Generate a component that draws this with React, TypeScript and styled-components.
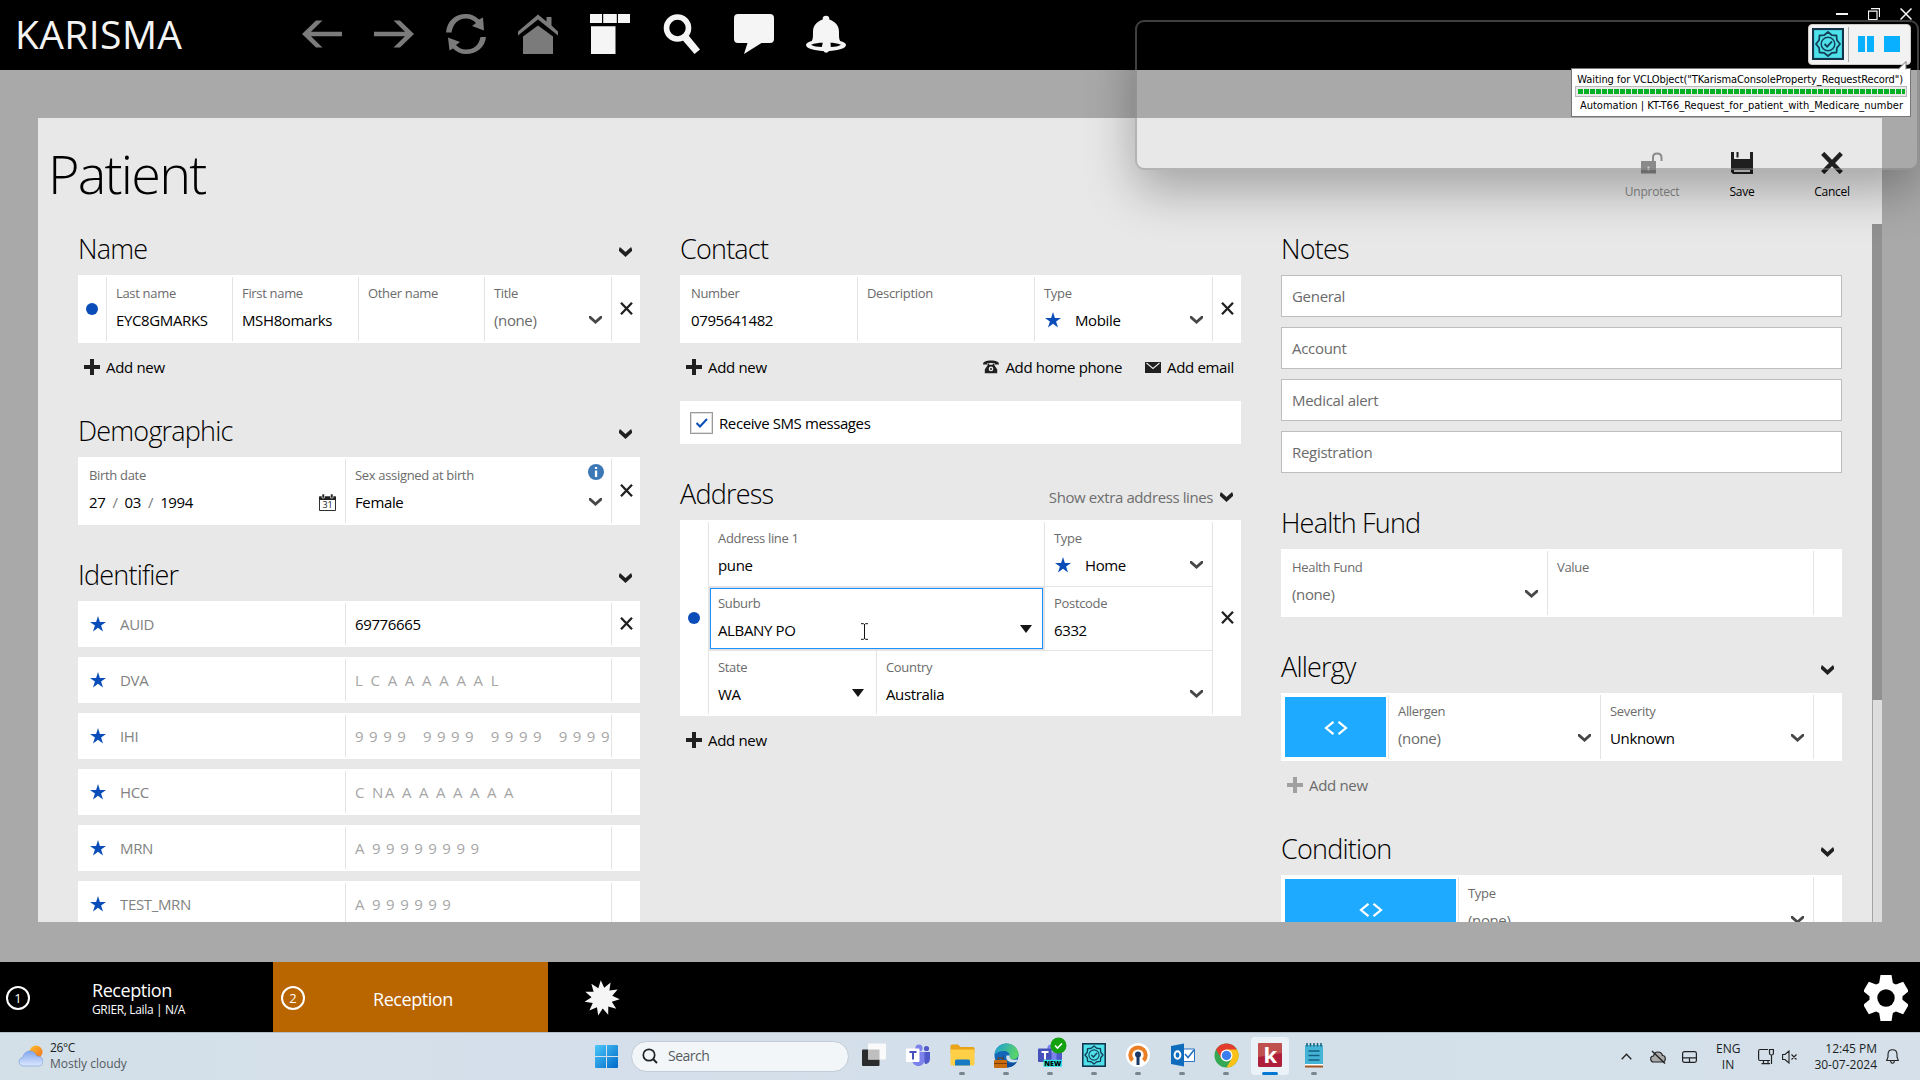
import React from 'react';
import styled, { createGlobalStyle } from 'styled-components';

const Global = createGlobalStyle`
  *, *::before, *::after { box-sizing: border-box; }
  html, body { margin: 0; padding: 0; overflow: hidden; background: #a9a9a9; }
  body { font-family: "Open Sans", "Noto Sans", sans-serif; color: #000; }
  svg { display: block; flex: none; }
`;

/* ---------- shell ---------- */

const Screen = styled.div`
  position: relative;
  width: 1920px;
  height: 1080px;
  overflow: hidden;
  display: flex;
  flex-direction: column;
  background: #a9a9a9;
`;

const TopBar = styled.header`
  height: 70px;
  flex: none;
  display: flex;
  align-items: flex-start;
  background: #000;
  color: #f4f4f4;
`;

const Brand = styled.div`
  width: 302px;
  padding-left: 15px;
  line-height: 67px;
  font-size: 39px;
  font-weight: 400;
  letter-spacing: 0.4px;
`;

const TopIcons = styled.nav`
  display: flex;
  gap: 32px;
  padding-top: 14px;
`;

const WindowControls = styled.div`
  margin-left: auto;
  padding: 8px 8px 0 0;
  display: flex;
  gap: 20px;
`;

const Workspace = styled.main`
  flex: 1;
  min-height: 0;
  padding: 48px 38px 40px;
  display: flex;
`;

const Panel = styled.section`
  flex: 1;
  display: flex;
  flex-direction: column;
  background: #e8e8e8;
  overflow: hidden;
`;

const PanelHeader = styled.div`
  height: 106px;
  flex: none;
  display: flex;
  justify-content: space-between;
`;

const PageTitle = styled.h1`
  margin: 0;
  padding: 20px 0 0 10px;
  font-size: 54px;
  line-height: 70px;
  font-weight: 300;
  letter-spacing: -1.8px;
`;

const PanelActions = styled.div`
  display: flex;
  padding: 34px 5px 0 0;
`;

const ActionButton = styled.div<{ $disabled?: boolean }>`
  width: 90px;
  display: flex;
  flex-direction: column;
  align-items: center;
  gap: 10px;
  font-size: 12px;
  line-height: 16px;
  letter-spacing: -0.25px;
  color: ${p => (p.$disabled ? '#868686' : '#000')};
`;

const ScrollArea = styled.div`
  flex: 1;
  min-height: 0;
  display: flex;
  justify-content: space-between;
`;

const Columns = styled.div`
  display: grid;
  grid-template-columns: 562px 561px 561px;
  column-gap: 40px;
  padding-left: 40px;
  align-items: start;
`;

const ScrollTrack = styled.div`
  width: 10px;
  background: #dddddd;
  border-left: 1px solid #a4a4a4;
`;

const ScrollThumb = styled.div`
  height: 476px;
  margin-left: -1px;
  background: #919191;
`;

/* ---------- form parts ---------- */

const Column = styled.div`
  display: flex;
  flex-direction: column;
  gap: 25px;
`;

const Section = styled.section`
  display: flex;
  flex-direction: column;
`;

const SectionHead = styled.div`
  height: 51px;
  display: flex;
  align-items: flex-end;
  justify-content: space-between;
  padding: 0 8px 8px 0;
`;

const Heading = styled.h2`
  margin: 0;
  font-size: 27px;
  line-height: 36px;
  font-weight: 300;
  letter-spacing: -0.8px;
`;

const HeadSide = styled.div`
  display: flex;
  align-items: center;
  gap: 7px;
  height: 20px;
  margin-bottom: 5px;
  font-size: 15px;
  letter-spacing: -0.4px;
  color: #6e6e6e;
`;

const Card = styled.div<{ $cols: string }>`
  display: grid;
  grid-template-columns: ${p => p.$cols};
  padding: 2px 0;
  background: #fff;
`;

const RowStack = styled.div`
  display: flex;
  flex-direction: column;
  gap: 10px;
`;

const Cell = styled.div<{ $first?: boolean; $focus?: boolean }>`
  height: 64px;
  min-width: 0;
  padding: 7px 9px 0 ${p => (p.$first ? '11px' : '9px')};
  border-left: ${p => (p.$first ? '0' : '1px solid #e4e4e4')};
  ${p => p.$focus && 'box-shadow: inset 0 0 0 1px #dde1e6, inset 0 0 0 2px #1e8fff;'}
`;

const AddressBody = styled.div`
  border-left: 1px solid #e4e4e4;
  display: flex;
  flex-direction: column;
`;

const AddressRow = styled.div<{ $cols: string }>`
  display: grid;
  grid-template-columns: ${p => p.$cols};
  height: 64px;
  & + & { border-top: 1px solid #e4e4e4; }
  & > div:first-child { padding-left: 9px; }
  & > div { height: auto; }
`;

const LabelRow = styled.div`
  display: flex;
  justify-content: space-between;
  height: 18px;
`;

const Label = styled.div`
  font-size: 13px;
  line-height: 18px;
  letter-spacing: -0.32px;
  color: #6b6b6b;
  white-space: nowrap;
`;

const ValueRow = styled.div`
  margin-top: 8px;
  height: 20px;
  display: flex;
  align-items: center;
  justify-content: space-between;
`;

const Value = styled.div<{ $muted?: boolean }>`
  display: flex;
  align-items: center;
  gap: 14px;
  font-size: 15px;
  line-height: 20px;
  letter-spacing: -0.37px;
  white-space: pre;
  color: ${p => (p.$muted ? '#6b6b6b' : '#000')};
`;

const StarSlot = styled.span`
  margin-left: 1px;
`;

const TriangleSlot = styled.span`
  margin: 0 3px 2px 0;
`;

const DateValue = styled(Value)`
  gap: 7px;
`;

const Slash = styled.span`
  color: #7d7d7d;
`;

const InfoBadge = styled.div`
  margin: -2px -2px 0 0;
`;

const SideCell = styled.div<{ $line?: boolean }>`
  display: flex;
  align-items: center;
  justify-content: center;
  padding-bottom: 1px;
  border-left: ${p => (p.$line ? '1px solid #e4e4e4' : '0')};
`;

const Dot = styled.span`
  width: 12px;
  height: 12px;
  border-radius: 50%;
  background: #0b4db8;
`;

const IdCell = styled.div<{ $line?: boolean }>`
  height: 42px;
  display: flex;
  align-items: center;
  gap: 14px;
  padding-left: ${p => (p.$line ? '9px' : '12px')};
  border-left: ${p => (p.$line ? '1px solid #e4e4e4' : '0')};
`;

const IdName = styled.span`
  font-size: 15px;
  letter-spacing: -0.35px;
  color: #828282;
`;

const Mask = styled.span<{ $ls: number; $ws: number }>`
  font-size: 15px;
  white-space: pre;
  color: #a6a6a6;
  letter-spacing: ${p => p.$ls}px;
  word-spacing: ${p => p.$ws}px;
`;

const MaskLead = styled.span`
  letter-spacing: 0.7px;
`;

const LinkRow = styled.div`
  height: 38px;
  padding: 14px 7px 0 6px;
  display: flex;
  align-items: flex-start;
  gap: 23px;
`;

const TextLink = styled.div<{ $muted?: boolean; $push?: boolean }>`
  display: flex;
  align-items: center;
  gap: 6px;
  height: 20px;
  margin-left: ${p => (p.$push ? 'auto' : '0')};
  font-size: 15px;
  line-height: 20px;
  letter-spacing: -0.33px;
  white-space: nowrap;
  color: ${p => (p.$muted ? '#6b6b6b' : '#000')};
`;

const CheckCard = styled.div`
  margin-top: 20px;
  height: 43px;
  padding-left: 10px;
  display: flex;
  align-items: center;
  gap: 6px;
  background: #fff;
  font-size: 15px;
  letter-spacing: -0.4px;
`;

const CheckBox = styled.span`
  width: 23px;
  height: 22px;
  display: flex;
  align-items: center;
  justify-content: center;
  border: 1px solid #9a9a9a;
  box-shadow: inset 0 0 0 1px #dedede;
`;

const NoteList = styled.div`
  display: flex;
  flex-direction: column;
  gap: 10px;
`;

const NoteBox = styled.div`
  height: 42px;
  padding-left: 10px;
  display: flex;
  align-items: center;
  border: 1px solid #bdbdbd;
  background: #fff;
  font-size: 15px;
  letter-spacing: -0.3px;
  color: #6b6b6b;
`;

const CodeTile = styled.div`
  margin: 2px 2px 2px 4px;
  display: flex;
  align-items: center;
  justify-content: center;
  padding-top: 2px;
  background: #1eabff;
`;

const TextCursor = styled.div`
  position: absolute;
  left: 860px;
  top: 623px;
`;

/* ---------- workspace tabs ---------- */

const TabBar = styled.footer`
  height: 70px;
  flex: none;
  display: flex;
  background: #000;
  color: #fff;
`;

const Tab = styled.div<{ $active?: boolean }>`
  width: ${p => (p.$active ? '275px' : '273px')};
  display: flex;
  align-items: center;
  padding-left: ${p => (p.$active ? '8px' : '6px')};
  background: ${p => (p.$active ? '#b96500' : '#000')};
`;

const TabNumber = styled.span`
  width: 24px;
  height: 24px;
  display: flex;
  align-items: center;
  justify-content: center;
  border: 2px solid #fff;
  border-radius: 50%;
  font-size: 13px;
  line-height: 20px;
  margin-top: 2px;
`;

const TabText = styled.div<{ $left: number }>`
  margin-left: ${p => p.$left}px;
  padding-top: 3px;
  display: flex;
  flex-direction: column;
`;

const TabTitle = styled.span`
  font-size: 18px;
  line-height: 22px;
  letter-spacing: -0.45px;
`;

const TabSub = styled.span`
  font-size: 12px;
  line-height: 18px;
  letter-spacing: -0.35px;
`;

const TabIcon = styled.div<{ $end?: boolean }>`
  display: flex;
  align-items: center;
  margin-left: ${p => (p.$end ? 'auto' : '36px')};
  padding: 2px ${p => (p.$end ? '12px' : '0')} 0 0;
`;

/* ---------- taskbar ---------- */

const TaskBar = styled.div`
  height: 48px;
  flex: none;
  display: flex;
  border-top: 1px solid #b4bec6;
  background: linear-gradient(90deg, #d3e0e8, #d5dfeb 28%, #d2dfe9 60%, #d5e0ea);
  color: #1b1f23;
  font-size: 12px;
  line-height: 16px;
`;

const Weather = styled.div`
  width: 593px;
  padding: 7px 0 0 18px;
  display: flex;
  gap: 7px;
`;

const WeatherIcon = styled.div`
  padding-top: 5px;
`;

const Muted = styled.div`
  color: #53595e;
`;

const Narrow = styled.div`
  letter-spacing: -0.35px;
`;

const StartButton = styled.div`
  width: 39px;
  padding: 12px 0 0 2px;
`;

const SearchBox = styled.div`
  width: 218px;
  height: 31px;
  margin: 8px 0 0 -1px;
  padding: 0 0 1px 10px;
  display: flex;
  align-items: center;
  gap: 10px;
  border-radius: 16px;
  border: 1px solid #c3ccd4;
  background: #f2f6f9;
  color: #565b60;
  font-size: 14px;
  letter-spacing: -0.5px;
`;

const AppList = styled.div`
  display: flex;
  gap: 6px;
  margin-left: 6px;
`;

const AppSlot = styled.div<{ $active?: boolean }>`
  width: 38px;
  height: 38px;
  margin-top: 4px;
  display: flex;
  flex-direction: column;
  align-items: center;
  justify-content: space-between;
  padding-top: 6px;
  border-radius: 4px;
  background: ${p => (p.$active ? '#ebf2f7' : 'transparent')};
`;

const Marker = styled.span<{ $active?: boolean }>`
  width: ${p => (p.$active ? '16px' : '6px')};
  height: 3px;
  border-radius: 2px;
  background: ${p => (p.$active ? '#0078d4' : '#7b858d')};
`;

const Tray = styled.div`
  margin-left: auto;
  display: grid;
  grid-template-columns: 29px 32px 34px 42px 24px 30px 74px 13px;
  align-items: center;
  padding-right: 21px;
`;

const TrayText = styled.div<{ $right?: boolean }>`
  width: ${p => (p.$right ? '65px' : '24px')};
  text-align: ${p => (p.$right ? 'right' : 'center')};
  white-space: nowrap;
`;

/* ---------- recording overlay ---------- */

const CaptureFrame = styled.div`
  position: absolute;
  left: 1135px;
  top: 20px;
  width: 784px;
  height: 150px;
  border: 2px solid rgba(125, 125, 125, 0.5);
  border-radius: 9px;
  box-shadow: 0 20px 50px rgba(0, 0, 0, 0.3);
`;

const Recorder = styled.div`
  position: absolute;
  left: 1808px;
  top: 24px;
  width: 103px;
  height: 41px;
  display: flex;
  align-items: center;
  padding: 0 0 1px 3px;
  border-radius: 4px;
  border: 1px solid #cfc9c6;
  background: #f2f2f2;
`;

const RecDivider = styled.span`
  width: 1px;
  height: 35px;
  margin: 0 9px 0 4px;
  background: #ababab;
`;

const RecBar = styled.span<{ $w: number; $gap: number }>`
  width: ${p => p.$w}px;
  height: 16px;
  margin-right: ${p => p.$gap}px;
  background: #08b0ff;
`;

const Tooltip = styled.div`
  position: absolute;
  left: 1571px;
  top: 68px;
  width: 340px;
  height: 49px;
  padding: 4px 3px 0;
  display: flex;
  flex-direction: column;
  border: 1px solid #767676;
  background: #fff;
  font-family: "DejaVu Sans Condensed", "DejaVu Sans", sans-serif;
  font-stretch: condensed;
  font-size: 11px;
  line-height: 13px;
  text-align: right;
  white-space: nowrap;
`;

const TooltipLine = styled.div<{ $spacing: number }>`
  padding-right: 4px;
  letter-spacing: ${p => p.$spacing}px;
`;

const TooltipTail = styled.div`
  position: absolute;
  right: 2px;
  top: -8px;
`;

const Progress = styled.div`
  height: 11px;
  margin: 0 0 2px;
  padding: 2px 1px 2px 2px;
  border: 1px solid #b9b9b9;
  background: #e9e9e9;
  flex: none;
`;

const ProgressFill = styled.div`
  height: 5px;
  background: repeating-linear-gradient(90deg, #06b025 0 5px, #e9e9e9 5px 6px);
`;

/* ---------- icons ---------- */

const Chevron = ({ bold }: { bold?: boolean }) => (
  <svg width="13" height="10" viewBox="0 0 13 10">
    <path d={bold ? 'M0.9 0 L6.5 5 L12.1 0 L13 2.2 V4 L6.5 10 L0 4 V2.2 Z' : 'M0 1 H1.8 L6.5 5.2 L11.2 1 H13 V3.2 L6.5 9 L0 3.2 Z'} fill={bold ? '#202020' : '#474747'} />
  </svg>
);

const Triangle = () => (
  <svg width="12" height="8" viewBox="0 0 12 8"><path d="M0 0H12L6 8Z" fill="#151515" /></svg>
);

const Cross = ({ size = 13, stroke = 2.3 }: { size?: number; stroke?: number }) => (
  <svg width={size} height={size} viewBox="0 0 13 13">
    <path d="M1 0.8L12 12.2M12 0.8L1 12.2" stroke="#202020" strokeWidth={stroke} fill="none" />
  </svg>
);

const Plus = ({ muted }: { muted?: boolean }) => (
  <svg width="16" height="16" viewBox="0 0 16 16"><path d="M6 0H10V6H16V10H10V16H6V10H0V6H6Z" fill={muted ? '#a0a0a0' : '#202020'} /></svg>
);

const Star = () => (
  <svg width="16" height="16" viewBox="0 0 16 16">
    <path d="M8 0L9.9 5.9H16L11.1 9.5L13 15.5L8 11.8L3 15.5L4.9 9.5L0 5.9H6.1Z" fill="#0b4db8" />
  </svg>
);

const Angles = () => (
  <svg width="24" height="14" viewBox="0 0 24 14">
    <path d="M9.5 0.8L2 7L9.5 13.2M14.5 0.8L22 7L14.5 13.2" stroke="#fff" strokeWidth="2.2" fill="none" />
  </svg>
);

const CalendarIcon = () => (
  <svg width="17" height="17" viewBox="0 0 17 17">
    <path d="M0.5 3H16.5V16.5H0.5Z" fill="#fff" stroke="#303030" />
    <path d="M0 2.5H17V6H0Z" fill="#202020" />
    <path d="M3 0H5.5V4H3ZM11.5 0H14V4H11.5Z" fill="#202020" stroke="#fff" strokeWidth="0.6" />
    <text x="8.6" y="14.4" fontSize="9" textAnchor="middle" fill="#202020" fontFamily="Open Sans">31</text>
  </svg>
);

const InfoIcon = () => (
  <svg width="16" height="16" viewBox="0 0 16 16">
    <circle cx="8" cy="8" r="8" fill="#3b78b5" />
    <path d="M6.9 3H9.2V5H6.9ZM6.9 6.4H9.2V13H6.9Z" fill="#fff" />
  </svg>
);

const PhoneIcon = () => (
  <svg width="16" height="14" viewBox="0 0 16 14">
    <path d="M0 4.500C0 1.500 3 0.500 8 0.500S16 1.500 16 4.500H11.800V3H4.200V4.500Z" fill="#202020" />
    <path d="M4.600 3.500H6.200V4.800H9.800V3.500H11.400V5.200L14.200 9.500V13.300H1.800V9.500L4.600 5.200Z" fill="#202020" />
    <circle cx="8" cy="8.900" r="2.300" fill="#e8e8e8" /><circle cx="8" cy="8.900" r="1" fill="#202020" />
  </svg>
);

const MailIcon = () => (
  <svg width="16" height="11" viewBox="0 0 16 11">
    <path d="M0 0H16V11H0Z" fill="#202020" /><path d="M1.500 1L8 6.500L14.500 1" fill="none" stroke="#e8e8e8" strokeWidth="1.100" />
  </svg>
);

const UnlockIcon = () => (
  <svg width="22" height="22" viewBox="0 0 22 22">
    <path d="M0 9H15V21.500H0Z" fill="#8b8b8b" />
    <path d="M12 9V5.500C12 2.500 13.500 1.500 16 1.500S20.500 2.500 20.500 5.500V9" fill="none" stroke="#8b8b8b" strokeWidth="2" />
    <path d="M6.500 14.500H8.500V18.500H6.500Z" fill="#cfcfcf" />
  </svg>
);

const SaveIcon = () => (
  <svg width="22" height="22" viewBox="0 0 22 22">
    <path d="M0 0H3V7H19V0H22V22H2L0 20Z" fill="#1f1f1f" /><path d="M5.500 0H7.500V5.500H5.500Z" fill="#1f1f1f" />
    <path d="M3 18H19V20H3Z" fill="#dadada" />
  </svg>
);

const BackIcon = ({ flip }: { flip?: boolean }) => (
  <svg width="40" height="40" viewBox="0 0 40 40">
    <path transform={flip ? 'translate(40 0) scale(-1 1)' : undefined} d="M0 20L14 6.500H20.500L9 17.700H40V22.300H9L20.500 33.500H14Z" fill="#7b7b7b" />
  </svg>
);

const RefreshIcon = () => (
  <svg width="40" height="40" viewBox="0 0 40 40">
    <path d="M0 18.500C1 7 9 0 20 0C25.500 0 29.500 2 33 5.500L37 3.500L38 16.500L26 12L30 9C27 6 24 4.500 20 4.500C12 4.500 7 10 5.500 18.500Z" fill="#7b7b7b" />
    <path d="M40 23C39 33 31 40 20 40C14.500 40 10.500 38 7 34.500L3.500 36.500L2 23.500L14 28L10 31C13 34 16 35.500 20 35.500C28 35.500 33 31 34.500 23Z" fill="#7b7b7b" />
  </svg>
);

const HomeIcon = () => (
  <svg width="40" height="40" viewBox="0 0 40 40">
    <path d="M0 17.500L20 0.500L28.500 7.500V3H33.500V11.500L40 17.500V21.500L20 5.500L0 21.500Z" fill="#7b7b7b" />
    <path d="M5 22.500L20 11.500L35 22.500V40H5Z" fill="#7b7b7b" />
  </svg>
);

const BoardIcon = () => (
  <svg width="40" height="40" viewBox="0 0 40 40">
    <path d="M0 0H12V9H0ZM13.200 0H26.800V9H13.200ZM28 0H40V9H28ZM1 12.300H25.500V40H1Z" fill="#f5f5f5" />
  </svg>
);

const SearchIcon = () => (
  <svg width="40" height="40" viewBox="0 0 40 40">
    <circle cx="15.500" cy="14" r="11" fill="none" stroke="#f5f5f5" strokeWidth="5.600" />
    <path d="M20.500 26L26.500 21.500L38 35.500L32.500 40Z" fill="#f5f5f5" />
  </svg>
);

const ChatIcon = () => (
  <svg width="40" height="40" viewBox="0 0 40 40">
    <path d="M4 0H36Q40 0 40 4V25Q40 29 36 29H27.500L10 40L13.500 29H4Q0 29 0 25V4Q0 0 4 0Z" fill="#f5f5f5" />
  </svg>
);

const BellIcon = () => (
  <svg width="40" height="40" viewBox="0 0 40 40">
    <circle cx="20" cy="5" r="3.300" fill="#f5f5f5" />
    <path d="M16.500 5.500C10 8 7 12 7 18C7 23 7 25 5.500 27.500H34.500C33 25 33 23 33 18C33 12 30 8 23.500 5.500Z" fill="#f5f5f5" />
    <path d="M20 25.500C9 25.500 0 27.500 0 31S9 37 20 37S40 34.500 40 31S31 25.500 20 25.500Z" fill="#f5f5f5" />
    <path d="M5 30.800C9 29 13 28.700 16.800 28.700L15.800 33C11 33 7.500 32.500 5 30.800ZM35 30.800C31 29 27 28.700 24.500 28.700L24.800 33C29 33 32.500 32.500 35 30.800Z" fill="#000" />
    <path d="M17 28H23.500V36.500Q20 41 17 36.500Z" fill="#f5f5f5" />
  </svg>
);

const CaptionIcon = ({ kind }: { kind: 'min' | 'restore' | 'close' }) => (
  <svg width="12" height="12" viewBox="0 0 12 12" stroke="#fff" fill="none">
    {kind === 'min' && <path d="M0 6H12" strokeWidth="2" />}
    {kind === 'restore' && <path d="M0.500 3V11.500H9V3ZM0 3.200H9.500M3 0.700H11.500V9" strokeWidth="1.200" />}
    {kind === 'close' && <path d="M0.500 0.500L11.500 11.500M11.500 0.500L0.500 11.500" strokeWidth="1.500" />}
  </svg>
);

const points = (n: number, cx: number, cy: number, r1: number, r2: number) =>
  Array.from({ length: n * 2 }, (_, i) => {
    const r = i % 2 ? r2 : r1;
    const a = (Math.PI * i) / n - Math.PI / 2;
    return `${(cx + r * Math.cos(a)).toFixed(2)},${(cy + r * Math.sin(a)).toFixed(2)}`;
  }).join(' ');

const BurstIcon = () => (
  <svg width="36" height="36" viewBox="0 0 36 36">
    <polygon points={points(11, 18, 18, 17.8, 10.5)} fill="#f5f5f5" transform="rotate(-4 18 18)" />
  </svg>
);

const GearIcon = () => (
  <svg width="44" height="46" viewBox="0 0 44 46">
    {[0, 60, 120].map(a => (
      <path key={a} d="M16.500 0H27.500L29 9V37L27.500 46H16.500L15 37V9Z" fill="#fff" transform={`rotate(${a} 22 23)`} />
    ))}
    <circle cx="22" cy="23" r="16.500" fill="#fff" /><circle cx="22" cy="23" r="8.700" fill="#000" />
  </svg>
);

const BadgeIcon = ({ w, h }: { w: number; h: number }) => (
  <svg width={w} height={h} viewBox="0 0 32 32">
    <rect x="1" y="1" width="30" height="30" fill="#4fe1ea" stroke="#12344d" strokeWidth="2.200" />
    <path d={`M${points(8, 16, 16, 12, 9.7).split(' ').join('L')}Z`} fill="none" stroke="#15405a" strokeWidth="1.800" strokeLinejoin="round" />
    <circle cx="16" cy="16" r="6.800" fill="none" stroke="#15405a" strokeWidth="1.500" />
    <path d="M12.500 16L15.200 18.700L20 13.300" fill="none" stroke="#15405a" strokeWidth="1.800" />
  </svg>
);

const WeatherGlyph = () => (
  <svg width="25" height="22" viewBox="0 0 25 22">
    <defs>
      <linearGradient id="sun" x1="0" y1="0" x2="1" y2="1"><stop offset="0" stopColor="#fbc02d" /><stop offset="1" stopColor="#f2701d" /></linearGradient>
      <linearGradient id="cloud" x1="0" y1="0" x2="0" y2="1"><stop offset="0" stopColor="#82a6ee" /><stop offset="1" stopColor="#dce8fd" /></linearGradient>
    </defs>
    <circle cx="18" cy="7" r="6.500" fill="url(#sun)" />
    <path d="M6 21C2.500 21 1 19 1 16.500S3 12.500 5 12.500C5.500 8.500 8.500 6 12 6S17.500 8 18.500 11C22 11 25 13 25 16.500S22.500 21 19.500 21Z" fill="url(#cloud)" stroke="#7599dc" strokeWidth="0.600" />
  </svg>
);

const WindowsIcon = () => (
  <svg width="23" height="23" viewBox="0 0 23 23">
    <defs><linearGradient id="win" x1="0" y1="0" x2="1" y2="1"><stop offset="0" stopColor="#4cc8fb" /><stop offset="1" stopColor="#0069c9" /></linearGradient></defs>
    <path d="M0 1Q0 0 1 0H11V11H0ZM12 0H22Q23 0 23 1V11H12ZM0 12H11V23H1Q0 23 0 22ZM12 12H23V22Q23 23 22 23H12Z" fill="url(#win)" />
  </svg>
);

const MagnifierIcon = () => (
  <svg width="16" height="16" viewBox="0 0 16 16"><circle cx="7" cy="7" r="5.700" fill="none" stroke="#222" strokeWidth="1.700" /><path d="M11 11L15 15" stroke="#222" strokeWidth="1.900" /></svg>
);

const TaskViewIcon = () => (
  <svg width="24" height="24" viewBox="0 0 24 24">
    <rect x="0" y="6.500" width="17.500" height="16.500" rx="1" fill="#2c2c2c" /><rect x="6" y="0.500" width="18" height="16" rx="1" fill="#fafafa" /><rect x="6" y="6.500" width="11.500" height="10" fill="#bfbfbf" />
  </svg>
);

const TeamsIcon = ({ fresh }: { fresh?: boolean }) => (
  <svg width="30" height="26" viewBox="0 0 30 26" overflow="visible">
    <circle cx="16" cy="5" r="3.600" fill="#7b83eb" /><circle cx="23.500" cy="5.500" r="2.600" fill="#5059c9" />
    <path d="M18 9H27V15.500C27 19.500 24.500 21 22 21Z" fill="#5059c9" />
    <path d="M9 9H21.500V16.500C21.500 20.500 19 23 15.500 23S9 20.500 9 16.500Z" fill="#7b83eb" />
    <rect x="3" y="5.500" width="13.500" height="13.500" rx="1" fill={fresh ? '#4650bb' : '#fff'} />
    <path d="M6.500 9H13.500M10 9V16.500" stroke={fresh ? '#fff' : '#4650bb'} strokeWidth="2" />
    {fresh && (
      <>
        <rect x="8.500" y="16.800" width="18.500" height="7" fill="#2fe3e3" />
        <text x="17.700" y="22.800" fontSize="7" fontWeight="800" textAnchor="middle" fontFamily="Open Sans">NEW</text>
        <circle cx="23.500" cy="2.500" r="8" fill="#13a10e" /><path d="M20 2.500L22.500 5L27 0.500" stroke="#fff" strokeWidth="1.600" fill="none" />
      </>
    )}
  </svg>
);

const FolderIcon = () => (
  <svg width="25" height="24" viewBox="0 0 25 24">
    <path d="M0.500 3Q0.500 1.500 2 1.500H8L10.500 4H23Q24.500 4 24.500 5.500V10H0.500Z" fill="#e8a317" />
    <path d="M0.500 6.500H24.500V21Q24.500 22.500 23 22.500H2Q0.500 22.500 0.500 21Z" fill="#ffcf48" />
    <path d="M5 22.500V18Q5 16.500 6.500 16.500H18.500Q20 16.500 20 18V22.500Z" fill="#1579c4" />
  </svg>
);

const EdgeIcon = () => (
  <svg width="26" height="26" viewBox="0 0 26 26">
    <defs><linearGradient id="edge" x1="0" y1="0" x2="1" y2="0.300"><stop offset="0" stopColor="#1c9cde" /><stop offset="1" stopColor="#56d368" /></linearGradient></defs>
    <circle cx="13.500" cy="12.500" r="12" fill="#1467b8" />
    <path d="M1.500 12C2 5 7 0.500 13.500 0.500S25.500 5.500 25.500 11C25.500 14.500 23 16.500 20 16.500S15.500 15 16.500 13C17 10 14.500 8 11 8C6 8 3 10 1.500 12Z" fill="url(#edge)" />
    <path d="M12 11C9.500 14 11 20 18 20.500L24 18.500C22 22 19 24.300 14 24.500C10 22 8 14 12 11Z" fill="#0d4c9a" />
    <path d="M17 12.500C15.500 15.500 18.500 17.500 24.500 16.500L23.500 19C17 20.500 12 17.500 13.500 12.500Z" fill="#d4e0ea" />
    <rect x="1" y="17" width="13" height="8" rx="1" fill="#c76c0c" /><path d="M5 17V15H10V17M1 20.500H14" stroke="#7d3d04" fill="none" />
  </svg>
);

const VpnIcon = () => (
  <svg width="24" height="24" viewBox="0 0 24 24">
    <circle cx="12" cy="12" r="12" fill="#fff" />
    <path d="M6.500 17.500A7.700 7.700 0 1 1 17.500 17.500" fill="none" stroke="#ea7e24" strokeWidth="4" />
    <circle cx="12" cy="11.500" r="3" fill="#1a3967" /><path d="M10.500 13H13.500V22H10.500Z" fill="#1a3967" />
  </svg>
);

const OutlookIcon = () => (
  <svg width="25" height="24" viewBox="0 0 25 24">
    <path d="M12 6H24.500V18.500H12Z" fill="#fff" stroke="#2a72c4" /><path d="M15 11L18 14.500L24 7" stroke="#1c6dc1" strokeWidth="1.500" fill="none" />
    <path d="M1 3L14 0.500V23.500L1 21Z" fill="#0f6cbd" /><ellipse cx="7.500" cy="12" rx="2.900" ry="3.700" stroke="#fff" strokeWidth="1.900" fill="none" />
  </svg>
);

const ChromeIcon = () => (
  <svg width="25" height="25" viewBox="0 0 25 25">
    <circle cx="12.500" cy="12.500" r="12" fill="#34a853" />
    <path d="M2.100 6.500A12 12 0 0 1 22.900 6.500L12.500 12.500Z" fill="#e33b2e" /><path d="M2.100 6.500L7.300 15.500L12.500 12.500L12.500 6.500Z" fill="#e33b2e" />
    <path d="M22.900 6.500A12 12 0 0 1 12.500 24.500L17.700 15.500L12.500 6.500Z" fill="#fbc116" />
    <circle cx="12.500" cy="12.500" r="6" fill="#fff" /><circle cx="12.500" cy="12.500" r="4.700" fill="#3b7ded" />
  </svg>
);

const KIcon = () => (
  <svg width="24" height="24" viewBox="0 0 24 24" overflow="visible">
    <rect width="24" height="24" rx="1.500" fill="#af1e3a" /><path d="M0 1.500Q0 0 1.500 0H22.500Q24 0 24 1.500V10L0 14Z" fill="#c0504f" />
    <text x="12.300" y="20" fontSize="22" fontWeight="700" textAnchor="middle" fill="#fff" fontFamily="Open Sans">k</text>
  </svg>
);

const NotepadIcon = () => (
  <svg width="20" height="25" viewBox="0 0 20 25">
    <rect x="1" y="2" width="18" height="20" rx="1" fill="#44b4d6" /><rect x="1" y="22" width="18" height="2.500" fill="#a3541f" /><rect x="1" y="21" width="18" height="1.500" fill="#fff" />
    <path d="M3 0V3.500M6.500 0V3.500M10 0V3.500M13.500 0V3.500M17 0V3.500" stroke="#155d78" strokeWidth="1.500" />
    <path d="M4.500 8H15.500M4.500 12.500H15.500M4.500 17H15.500" stroke="#125f80" strokeWidth="1.700" />
  </svg>
);

/* ---------- composed fields ---------- */

type FieldProps = {
  label: string; value?: React.ReactNode; muted?: boolean; star?: boolean; first?: boolean;
  focus?: boolean; info?: boolean; icon?: 'chevron' | 'triangle';
};

const Field = ({ label, value, muted, star, first, focus, info, icon }: FieldProps) => (
  <Cell $first={first} $focus={focus}>
    <LabelRow><Label>{label}</Label>{info && <InfoBadge><InfoIcon /></InfoBadge>}</LabelRow>
    <ValueRow>
      <Value $muted={muted}>{star && <StarSlot><Star /></StarSlot>}{value}</Value>
      {icon === 'chevron' && <Chevron />}
      {icon === 'triangle' && <TriangleSlot><Triangle /></TriangleSlot>}
    </ValueRow>
  </Cell>
);

const SectionHeader = ({ title, chevron, extra }: { title: string; chevron?: boolean; extra?: string }) => (
  <SectionHead>
    <Heading>{title}</Heading>
    {(chevron || extra) && <HeadSide>{extra}<Chevron bold /></HeadSide>}
  </SectionHead>
);

const identifiers: { name: string; node: React.ReactNode; removable?: boolean }[] = [
  { name: 'AUID', node: <Value>69776665</Value>, removable: true },
  { name: 'DVA', node: <Mask $ls={1.9} $ws={0}>L C A A A A A A L</Mask> },
  { name: 'IHI', node: <Mask $ls={-0.3} $ws={2.2}>9 9 9 9   9 9 9 9   9 9 9 9   9 9 9 9</Mask> },
  { name: 'HCC', node: <Mask $ls={1.8} $ws={0}>C NA A A A A A A A</Mask> },
  { name: 'MRN', node: <Mask $ls={-0.3} $ws={2.2}><MaskLead>A </MaskLead>9 9 9 9 9 9 9 9</Mask> },
  { name: 'TEST_MRN', node: <Mask $ls={-0.3} $ws={2.2}><MaskLead>A </MaskLead>9 9 9 9 9 9</Mask> },
];

const Remove = () => <SideCell $line><Cross /></SideCell>;
const Blank = () => <SideCell $line />;

export default function App() {
  return (
    <>
      <Global />
      <Screen>
        <TopBar>
          <Brand>KARISMA</Brand>
          <TopIcons>
            <BackIcon /><BackIcon flip /><RefreshIcon /><HomeIcon /><BoardIcon /><SearchIcon /><ChatIcon /><BellIcon />
          </TopIcons>
          <WindowControls>
            <CaptionIcon kind="min" /><CaptionIcon kind="restore" /><CaptionIcon kind="close" />
          </WindowControls>
        </TopBar>

        <Workspace>
          <Panel>
            <PanelHeader>
              <PageTitle>Patient</PageTitle>
              <PanelActions>
                <ActionButton $disabled><UnlockIcon />Unprotect</ActionButton>
                <ActionButton><SaveIcon />Save</ActionButton>
                <ActionButton><Cross size={22} stroke={2.6} />Cancel</ActionButton>
              </PanelActions>
            </PanelHeader>
            <ScrollArea>
              <Columns>
                <Column>
                  <Section>
                    <SectionHeader title="Name" chevron />
                    <Card $cols="28px 126px 126px 126px 127px 29px">
                      <SideCell><Dot /></SideCell>
                      <Field label="Last name" value="EYC8GMARKS" />
                      <Field label="First name" value="MSH8omarks" />
                      <Field label="Other name" />
                      <Field label="Title" value="(none)" muted icon="chevron" />
                      <Remove />
                    </Card>
                    <LinkRow><TextLink><Plus />Add new</TextLink></LinkRow>
                  </Section>
                  <Section>
                    <SectionHeader title="Demographic" chevron />
                    <Card $cols="267px 266px 29px">
                      <Cell $first>
                        <LabelRow><Label>Birth date</Label></LabelRow>
                        <ValueRow>
                          <DateValue><span>27</span><Slash>/</Slash><span>03</span><Slash>/</Slash><span>1994</span></DateValue>
                          <CalendarIcon />
                        </ValueRow>
                      </Cell>
                      <Field label="Sex assigned at birth" value="Female" info icon="chevron" />
                      <Remove />
                    </Card>
                  </Section>
                  <Section>
                    <SectionHeader title="Identifier" chevron />
                    <RowStack>
                      {identifiers.map(row => (
                        <Card key={row.name} $cols="267px 266px 29px">
                          <IdCell><Star /><IdName>{row.name}</IdName></IdCell>
                          <IdCell $line>{row.node}</IdCell>
                          {row.removable ? <Remove /> : <Blank />}
                        </Card>
                      ))}
                    </RowStack>
                  </Section>
                </Column>

                <Column>
                  <Section>
                    <SectionHeader title="Contact" />
                    <Card $cols="177px 177px 178px 29px">
                      <Field first label="Number" value="0795641482" />
                      <Field label="Description" />
                      <Field label="Type" value="Mobile" star icon="chevron" />
                      <Remove />
                    </Card>
                    <LinkRow>
                      <TextLink><Plus />Add new</TextLink>
                      <TextLink $push><PhoneIcon />Add home phone</TextLink>
                      <TextLink><MailIcon />Add email</TextLink>
                    </LinkRow>
                    <CheckCard>
                      <CheckBox>
                        <svg width="14" height="12" viewBox="0 0 14 12"><path d="M1.500 6L5 9.500L12 2" stroke="#0b4db8" strokeWidth="2" fill="none" /></svg>
                      </CheckBox>
                      Receive SMS messages
                    </CheckCard>
                  </Section>
                  <Section>
                    <SectionHeader title="Address" extra="Show extra address lines" />
                    <Card $cols="28px 504px 29px">
                      <SideCell><Dot /></SideCell>
                      <AddressBody>
                        <AddressRow $cols="335px 168px">
                          <Field first label="Address line 1" value="pune" />
                          <Field label="Type" value="Home" star icon="chevron" />
                        </AddressRow>
                        <AddressRow $cols="335px 168px">
                          <Field first focus label="Suburb" value="ALBANY PO" icon="triangle" />
                          <Field label="Postcode" value="6332" />
                        </AddressRow>
                        <AddressRow $cols="167px 336px">
                          <Field first label="State" value="WA" icon="triangle" />
                          <Field label="Country" value="Australia" icon="chevron" />
                        </AddressRow>
                      </AddressBody>
                      <Remove />
                    </Card>
                    <LinkRow><TextLink><Plus />Add new</TextLink></LinkRow>
                  </Section>
                </Column>

                <Column>
                  <Section>
                    <SectionHeader title="Notes" />
                    <NoteList>
                      {['General', 'Account', 'Medical alert', 'Registration'].map(n => <NoteBox key={n}>{n}</NoteBox>)}
                    </NoteList>
                  </Section>
                  <Section>
                    <SectionHeader title="Health Fund" />
                    <Card $cols="266px 266px 29px">
                      <Field first label="Health Fund" value="(none)" muted icon="chevron" />
                      <Field label="Value" />
                      <Blank />
                    </Card>
                  </Section>
                  <Section>
                    <SectionHeader title="Allergy" chevron />
                    <Card $cols="107px 212px 213px 29px">
                      <CodeTile><Angles /></CodeTile>
                      <Field label="Allergen" value="(none)" muted icon="chevron" />
                      <Field label="Severity" value="Unknown" icon="chevron" />
                      <Blank />
                    </Card>
                    <LinkRow><TextLink $muted><Plus muted />Add new</TextLink></LinkRow>
                  </Section>
                  <Section>
                    <SectionHeader title="Condition" chevron />
                    <Card $cols="177px 355px 29px">
                      <CodeTile><Angles /></CodeTile>
                      <Field label="Type" value="(none)" muted icon="chevron" />
                      <Blank />
                    </Card>
                  </Section>
                </Column>
              </Columns>
              <ScrollTrack><ScrollThumb /></ScrollTrack>
            </ScrollArea>
          </Panel>
        </Workspace>

        <TabBar>
          <Tab>
            <TabNumber>1</TabNumber>
            <TabText $left={62}><TabTitle>Reception</TabTitle><TabSub>GRIER, Laila | N/A</TabSub></TabText>
          </Tab>
          <Tab $active>
            <TabNumber>2</TabNumber>
            <TabText $left={68}><TabTitle>Reception</TabTitle></TabText>
          </Tab>
          <TabIcon><BurstIcon /></TabIcon>
          <TabIcon $end><GearIcon /></TabIcon>
        </TabBar>

        <TaskBar>
          <Weather>
            <WeatherIcon><WeatherGlyph /></WeatherIcon>
            <div><Narrow>26°C</Narrow><Muted>Mostly cloudy</Muted></div>
          </Weather>
          <StartButton><WindowsIcon /></StartButton>
          <SearchBox><MagnifierIcon />Search</SearchBox>
          <AppList>
            <AppSlot><TaskViewIcon /></AppSlot>
            <AppSlot><TeamsIcon /></AppSlot>
            <AppSlot><FolderIcon /><Marker /></AppSlot>
            <AppSlot><EdgeIcon /><Marker /></AppSlot>
            <AppSlot><TeamsIcon fresh /><Marker /></AppSlot>
            <AppSlot><BadgeIcon w={24} h={24} /><Marker /></AppSlot>
            <AppSlot><VpnIcon /><Marker /></AppSlot>
            <AppSlot><OutlookIcon /><Marker /></AppSlot>
            <AppSlot><ChromeIcon /><Marker /></AppSlot>
            <AppSlot $active><KIcon /><Marker $active /></AppSlot>
            <AppSlot><NotepadIcon /><Marker /></AppSlot>
          </AppList>
          <Tray>
            <svg width="11" height="7" viewBox="0 0 11 7"><path d="M0.700 6.300L5.500 1.200L10.300 6.300" stroke="#222" strokeWidth="1.300" fill="none" /></svg>
            <svg width="16" height="14" viewBox="0 0 16 14"><path d="M4 12C1.500 12 0.700 10.500 0.700 8.800S2 6 3.500 6C4 3.500 5.500 2 8 2S12 3.500 12.500 5.500C14.500 5.500 15.300 7 15.300 8.800S14 12 12 12Z" fill="#aaa" stroke="#222" strokeWidth="1.200" /><path d="M2 1L15 13.500" stroke="#222" strokeWidth="1.400" /></svg>
            <svg width="15" height="12" viewBox="0 0 15 12" fill="none" stroke="#222" strokeWidth="1.200"><rect x="0.600" y="0.600" width="13.800" height="10.800" rx="1.800" /><path d="M0.600 6.800H14.400M7.500 6.800V11.400" /></svg>
            <TrayText>ENG<br />IN</TrayText>
            <svg width="16" height="17" viewBox="0 0 16 17" fill="none" stroke="#222" strokeWidth="1.200"><path d="M10 1.500H2Q0.600 1.500 0.600 3V11Q0.600 12.500 2 12.500H12M5.500 12.500V15.500M10 12.500V15.500M3.500 15.700H12M13.500 7V16M11.500 1.500H15.400V5.500Q15.400 7 13.500 7T11.500 5.500Z" /></svg>
            <svg width="15" height="14" viewBox="0 0 15 14" fill="none" stroke="#222" strokeWidth="1.100"><path d="M0.600 4.500H3L7 1V13L3 9.500H0.600ZM9.500 4.500L14.500 9.500M14.500 4.500L9.500 9.500" /></svg>
            <TrayText $right>12:45 PM<br />30-07-2024</TrayText>
            <svg width="13" height="15" viewBox="0 0 13 15" fill="none" stroke="#222" strokeWidth="1.100"><path d="M2 8V5.500C2 2.500 4 0.700 6.500 0.700S11 2.500 11 5.500V8L12.300 11.500H0.700ZM4.700 11.700C4.700 13.300 5.500 14.200 6.500 14.200S8.300 13.300 8.300 11.700" /></svg>
          </Tray>
        </TaskBar>

        <TextCursor>
          <svg width="9" height="17" viewBox="0 0 9 17"><path d="M1 0.700H3.500L4.500 1.500L5.500 0.700H8M4.500 1V16M1 16.300H3.500L4.500 15.500L5.500 16.300H8" stroke="#111" strokeWidth="1" fill="none" /></svg>
        </TextCursor>

        <CaptureFrame />
        <Recorder>
          <BadgeIcon w={32} h={32} />
          <RecDivider />
          <RecBar $w={7} $gap={2} /><RecBar $w={7} $gap={10} /><RecBar $w={16} $gap={0} />
        </Recorder>
        <Tooltip>
          <TooltipTail><svg width="10" height="9" viewBox="0 0 10 9"><path d="M0 8.500L8 0.500V8.500" fill="#fff" stroke="#767676" /></svg></TooltipTail>
          <TooltipLine $spacing={-0.09}>Waiting for VCLObject("TKarismaConsoleProperty_RequestRecord")</TooltipLine>
          <Progress><ProgressFill /></Progress>
          <TooltipLine $spacing={0.01}>Automation | KT-T66_Request_for_patient_with_Medicare_number</TooltipLine>
        </Tooltip>
      </Screen>
    </>
  );
}
